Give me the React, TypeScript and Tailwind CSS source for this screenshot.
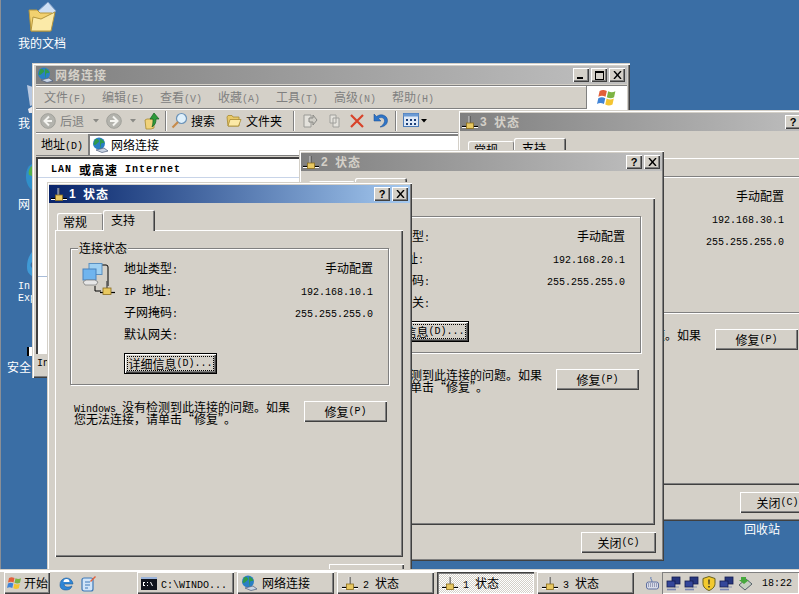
import React from "react";

// win2003 desktop: three status dialogs over the network connections window
const raised = "shadow-[inset_1px_1px_0_#fff,inset_-1px_-1px_0_#404040,inset_-2px_-2px_0_#808080]";
const frame = "shadow-[inset_1px_1px_0_#d4d0c8,inset_2px_2px_0_#fff,inset_-1px_-1px_0_#404040,inset_-2px_-2px_0_#808080]";

// simsun has half width latin, so ascii runs get a 6px wide mono face
const Txt: React.FC<{ text: string }> = ({ text }) => (
    <>
        {text.split(/([\x00-\x7f]+)/).map((part, i) =>
            i % 2 === 1 ? (
                <span key={i} className="font-['Liberation_Mono',monospace] text-[10px] leading-[6px] whitespace-pre">{part}</span>
            ) : (
                <span key={i}>{part}</span>
            )
        )}
    </>
);

const LanIcon = () => (
    <svg width="18" height="16" viewBox="0 0 18 16" className="shrink-0">
        <path d="M1 12.500h16" stroke="#000" strokeWidth="1.200" />
        <path d="M1 13.500h16" stroke="#fff" strokeWidth="1" />
        <path d="M9 2v7" stroke="#555" strokeWidth="1.400" />
        <path d="M8 2v7" stroke="#eee" strokeWidth="0.800" />
        <rect x="5.500" y="9" width="7" height="5.500" fill="#e8c860" stroke="#8a6d1e" strokeWidth="0.800" />
    </svg>
);

const GlobeIcon = () => (
    <svg width="17" height="16" viewBox="0 0 17 16" className="shrink-0">
        <circle cx="7" cy="6.500" r="6" fill="#2a7fc4" />
        <path d="M3 2.500c2-1 3 0 4 1s-1 2-2 3-2 2-3.500 1M8 1.500c2 1 4 2 4.500 4-1.500 1-3 0-3.500 1.500S9 10 8 11" fill="#2f9a4c" />
        <path d="M4 13l6 2.500 6-1.500-4-3z" fill="#c9d4e4" stroke="#4a5a7a" strokeWidth="0.700" />
    </svg>
);

const FolderIcon: React.FC<{ size?: number }> = ({ size = 16 }) => (
    <svg width={size} height={size} viewBox="0 0 16 16" className="shrink-0">
        <path d="M1 4l1-1.500h4l1 1.500h6v9H2z" fill="#e8c868" stroke="#a88a30" strokeWidth="0.800" />
        <path d="M2 13l2-6.500h11l-2.500 6.500z" fill="#fbe9a6" stroke="#a88a30" strokeWidth="0.800" />
    </svg>
);

const NavIcon: React.FC<{ dir: "l" | "r" }> = ({ dir }) => (
    <svg width="16" height="16" viewBox="0 0 16 16" className="shrink-0">
        <circle cx="8" cy="8" r="7.300" fill="#b3b3ad" stroke="#a0a09a" />
        <path d={dir === "l" ? "M9 3.500L4.500 8 9 12.500M5 8h7" : "M7 3.500L11.500 8 7 12.500M11 8H4"} fill="none" stroke="#f4f4f0" strokeWidth="2" />
    </svg>
);

const Caret = ({ color = "#8a8a86" }: { color?: string }) => (
    <svg width="6" height="4" viewBox="0 0 6 4" className="shrink-0">
        <path d="M0 0h6L3 3.500z" fill={color} />
    </svg>
);

const Sep = () => <div className="h-[20px] w-[2px] shrink-0 border-l border-[#808080] bg-white" />;

const WinFlag: React.FC<{ size?: number }> = ({ size = 16 }) => (
    <svg width={size} height={size} viewBox="0 0 16 16" className="shrink-0">
        <path d="M2 3c2-1 3-1 5.500 0l-1 4.500C4.500 6.500 3 6.500 1 7.500z" fill="#e2603a" />
        <path d="M8.500 3.200c2 1 3.500 1 5.500 0l-1 4.600c-2 1-3.500 .8-5.500 0z" fill="#7cb342" />
        <path d="M1 8.500c2-1 3.500-1 5.300 0l-1 4.500c-2-1-3.500-1-5.300 0z" fill="#3f83d6" />
        <path d="M7.300 8.800c2 1 3.500 1 5.500 0l-1 4.500c-2 1-3.500 1-5.500 0z" fill="#f4c430" />
    </svg>
);

const TrayPc = () => (
    <svg width="15" height="15" viewBox="0 0 15 15" className="shrink-0">
        <rect x="6" y="1" width="8" height="7" fill="#27367e" stroke="#141c50" strokeWidth="0.800" />
        <path d="M8 9v2h5" fill="none" stroke="#8a94b0" />
        <rect x="1" y="5" width="8" height="6" fill="#34469a" stroke="#141c50" strokeWidth="0.800" />
        <path d="M1 13.500h9" stroke="#7c88b4" strokeWidth="1.600" />
    </svg>
);

const NetworkBig = () => (
    <svg width="34" height="34" viewBox="0 0 34 34">
        <path d="M20 3h4q2 0 2 2v19M13 24v5h6" fill="none" stroke="#000" />
        <rect x="7" y="1.500" width="13" height="11" fill="#9fd0f2" stroke="#5a8fc0" />
        <rect x="1" y="7" width="13" height="11" fill="#6fb4ee" stroke="#4a82bc" />
        <path d="M1 20l3-2h9l3 2-2 3H3z" fill="#e6e6e6" stroke="#808080" strokeWidth="0.800" />
        <path d="M18 30.500h15" stroke="#000" strokeWidth="1.200" />
        <path d="M25 19v7" stroke="#555" strokeWidth="1.400" />
        <rect x="21" y="26" width="8" height="6.500" fill="#e8c860" stroke="#8a6d1e" strokeWidth="0.800" />
    </svg>
);

const Btn: React.FC<{ text: string; className: string }> = ({ text, className }) => (
    <div className={`flex items-center justify-center bg-[#d4d0c8] ${raised} ${className}`}>
        <Txt text={text} />
    </div>
);

const TitleBar: React.FC<{ active?: boolean; icon: React.ReactNode; title: React.ReactNode; children: React.ReactNode }> = ({ active, icon, title, children }) => (
    <div
        className={`flex h-[18px] shrink-0 items-center pl-[1px] pr-[2px] font-bold tracking-[1px] ${
            active ? "bg-gradient-to-r from-[#0a246a] to-[#a6caf0] text-white" : "bg-gradient-to-r from-[#808080] to-[#c0c0c0] text-[#d4d0c8]"
        }`}
    >
        {icon}
        <span className="ml-[1px] flex flex-1 items-center whitespace-pre">{title}</span>
        {children}
    </div>
);

const CapBtn: React.FC<{ children: React.ReactNode }> = ({ children }) => (
    <div className={`ml-[2px] flex h-[14px] w-[16px] items-center justify-center bg-[#d4d0c8] tracking-normal text-black ${raised}`}>
        {children}
    </div>
);

const CloseGlyph = () => (
    <svg width="9" height="8" viewBox="0 0 9 8"><path d="M1 0l7 8M8 0L1 8" stroke="#000" strokeWidth="1.400" /></svg>
);

const StatusDialog: React.FC<{ n: number; ip: string; active?: boolean; className: string }> = ({ n, ip, active, className }) => {
    const rows = [
        ["地址类型:", "手动配置"],
        ["IP 地址:", ip],
        ["子网掩码:", "255.255.255.0"],
        ["默认网关:", ""],
    ];
    return (
        <div className={`absolute flex h-[411px] w-[365px] flex-col bg-[#d4d0c8] px-[2px] pt-[3px] ${frame} ${className}`}>
            <TitleBar
                active={active}
                icon={<LanIcon />}
                title={
                    <>
                        <span className="w-[14px] font-['Liberation_Sans',sans-serif] text-[12px]">{n}</span>
                        <span>状态</span>
                    </>
                }
            >
                <CapBtn><span className="font-['Liberation_Sans',sans-serif] text-[11px] font-bold leading-none">?</span></CapBtn>
                <CapBtn><CloseGlyph /></CapBtn>
            </TitleBar>

            {/* tabs */}
            <div className="flex h-[27px] shrink-0 items-end pl-[8px]">
                <div className="flex h-[17px] w-[46px] items-center rounded-t-[2px] pl-[6px] shadow-[inset_1px_1px_0_#fff,inset_-1px_0_0_#808080]">常规</div>
                <div className="relative -mb-[1px] flex h-[21px] w-[52px] items-start rounded-t-[2px] bg-[#d4d0c8] pl-[8px] pt-[1px] shadow-[inset_1px_1px_0_#fff,inset_-1px_0_0_#404040,inset_-2px_0_0_#808080]">支持</div>
            </div>

            {/* tab panel */}
            <div className="ml-[6px] flex h-[327px] w-[348px] shrink-0 flex-col px-[15px] pt-[18px] shadow-[inset_1px_1px_0_#fff,inset_-1px_-1px_0_#404040,inset_-2px_-2px_0_#808080]">
                <div className="relative flex h-[137px] w-[319px] shrink-0 border border-[#808080] shadow-[1px_1px_0_#fff,inset_1px_1px_0_#fff]">
                    <span className="absolute -top-[8px] left-[7px] bg-[#d4d0c8] px-[1px] leading-[14px]">连接状态</span>
                    <div className="w-[53px] shrink-0 pl-[11px] pt-[13px]"><NetworkBig /></div>
                    <div className="flex flex-1 flex-col pr-[15px] pt-[8px]">
                        {rows.map(([label, value]) => (
                            <div key={label} className="flex h-[22px] shrink-0 items-center justify-between">
                                <span><Txt text={label} /></span>
                                <span><Txt text={value} /></span>
                            </div>
                        ))}
                        <div className="mt-[8px] h-[21px] w-[93px] border border-black">
                            <div className={`flex h-full items-center justify-center bg-[#d4d0c8] ${raised}`}>
                                <div className="flex h-[15px] w-[87px] items-center justify-center whitespace-nowrap border border-dotted border-black">
                                    <Txt text="详细信息(D)..." />
                                </div>
                            </div>
                        </div>
                    </div>
                </div>
                <div className="mt-[16px] flex items-start justify-between pl-[4px] pr-[1px]">
                    <p className="w-[225px] leading-[12px]">
                        <Txt text="Windows 没有检测到此连接的问题。如果" />
                        <br />
                        <Txt text="您无法连接，请单击“修复”。" />
                    </p>
                    <Btn text="修复(P)" className="h-[21px] w-[83px]" />
                </div>
            </div>

            <div className="mt-[7px] flex justify-end pr-[6px]">
                <Btn text="关闭(C)" className="h-[21px] w-[75px]" />
            </div>
        </div>
    );
};

const Explorer = () => (
    <div className={`absolute left-[32px] top-[63px] flex h-[315px] w-[598px] flex-col bg-[#d4d0c8] pl-[4px] pr-[3px] pt-[3px] ${frame}`}>
        <TitleBar icon={<GlobeIcon />} title="网络连接">
            <CapBtn><div className="mt-[6px] h-[2px] w-[6px] -translate-x-[1px] bg-black" /></CapBtn>
            <CapBtn><div className="h-[9px] w-[9px] border border-t-2 border-black" /></CapBtn>
            <CapBtn><CloseGlyph /></CapBtn>
        </TitleBar>

        {/* menu bar */}
        <div className="mt-[1px] flex h-[24px] shrink-0 items-center border-y border-[#808080] pl-[8px] text-[#808080] shadow-[inset_0_1px_0_#fff]">
            {["文件(F)", "编辑(E)", "查看(V)", "收藏(A)", "工具(T)", "高级(N)", "帮助(H)"].map((m) => (
                <span key={m} className="w-[58px] shrink-0"><Txt text={m} /></span>
            ))}
            <div className="ml-auto flex h-[23px] w-[41px] items-center justify-center self-start border-l border-[#808080] bg-white">
                <WinFlag size={21} />
            </div>
        </div>

        {/* toolbar */}
        <div className="flex h-[24px] shrink-0 items-center border-b border-[#808080] pl-[4px] shadow-[inset_0_1px_0_#fff]">
            <NavIcon dir="l" />
            <span className="ml-[4px] w-[33px] text-[#808080]">后退</span>
            <Caret />
            <div className="ml-[7px]"><NavIcon dir="r" /></div>
            <div className="ml-[8px]"><Caret /></div>
            <div className="ml-[8px] mr-[5px] flex">
                <svg width="16" height="18" viewBox="0 0 16 18" className="shrink-0">
                    <path d="M1 8l2-1h7v9l-3 1-5 0z" fill="#f0d27a" stroke="#a88a30" strokeWidth="0.800" />
                    <path d="M10 1l5 6h-3c0 4-1 6-4 8 1-3 1-5 1-8H6z" fill="#2e9a3c" stroke="#14601e" strokeWidth="0.700" />
                </svg>
            </div>
            <Sep />
            <svg width="17" height="17" viewBox="0 0 17 17" className="ml-[4px] shrink-0">
                <circle cx="10.500" cy="6.500" r="5" fill="#dff0fb" stroke="#6b93b8" strokeWidth="1.200" />
                <path d="M7 10l-5.500 5.500" stroke="#c68a4a" strokeWidth="2.200" />
            </svg>
            <span className="ml-[3px] w-[35px] shrink-0">搜索</span>
            <FolderIcon />
            <span className="ml-[4px] w-[47px] shrink-0">文件夹</span>
            <Sep />
            <svg width="16" height="16" viewBox="0 0 16 16" className="ml-[7px] shrink-0">
                <path d="M2 2h7v12H2z" fill="#e4e2dc" stroke="#9a9a96" />
                <path d="M7 5h4V2l4 5-4 5V9H7z" fill="#cfcdc6" stroke="#8a8a86" />
            </svg>
            <svg width="16" height="16" viewBox="0 0 16 16" className="ml-[9px] shrink-0">
                <path d="M3 2h6v8H3zM6 5h6v9H6z" fill="#e4e2dc" stroke="#a0a09c" />
            </svg>
            <svg width="16" height="16" viewBox="0 0 16 16" className="ml-[6px] shrink-0">
                <path d="M2 2l12 12M14 2L2 14" stroke="#d8432a" strokeWidth="2.200" />
            </svg>
            <svg width="17" height="17" viewBox="0 0 17 17" className="ml-[7px] shrink-0">
                <path d="M2 2v7h7L6.500 6.500C9 4.500 13 6 12.500 9.500 12 12 10 14 8 15c4 0 7.500-2.500 7.500-6.500 0-5-6.500-7.500-11-4z" fill="#2d74c8" stroke="#184a8c" strokeWidth="0.500" />
            </svg>
            <div className="ml-[6px]"><Sep /></div>
            <svg width="17" height="15" viewBox="0 0 17 15" className="ml-[6px] shrink-0">
                <rect x="0.500" y="0.500" width="15" height="13" fill="#dfe9f6" stroke="#4a7ab8" />
                <path d="M0.500 0.500h15v3h-15z" fill="#6a9ad4" />
                <path d="M3 6h2v2H3zM7 6h2v2H7zM11 6h2v2h-2zM3 10h2v2H3zM7 10h2v2H7zM11 10h2v2h-2z" fill="#1c3f78" />
            </svg>
            <div className="ml-[1px]"><Caret color="#000" /></div>
        </div>

        {/* address bar */}
        <div className="flex h-[23px] shrink-0 items-center border-b border-[#808080] pl-[5px] shadow-[inset_0_1px_0_#fff]">
            <span className="w-[47px] shrink-0"><Txt text="地址(D)" /></span>
            <div className="flex h-[21px] flex-1 items-center border-l-2 border-t-2 border-[#808080] bg-white pl-[2px]">
                <GlobeIcon />
                <span className="ml-[2px]">网络连接</span>
            </div>
        </div>

        {/* content */}
        <div className="mt-[1px] flex h-[197px] shrink-0 flex-col border-l-2 border-t-2 border-[#404040] bg-white">
            <div className="flex h-[19px] shrink-0 items-center border-b border-[#c8d4e8] pl-[13px] pt-[3px] font-bold tracking-[1px]">
                <Txt text="LAN 或高速 Internet" />
            </div>
            <div className="mt-[98px] h-[1px] bg-[#a8bcd8]" />
        </div>

        {/* status bar */}
        <div className="flex h-[20px] shrink-0 items-center pl-[1px]"><Txt text="Internet" /></div>
    </div>
);

const TaskBtn: React.FC<{ icon: React.ReactNode; text: string; active?: boolean }> = ({ icon, text, active }) => (
    <div
        className={`flex h-[22px] w-[97px] shrink-0 items-center gap-[4px] overflow-hidden pl-[4px] whitespace-pre ${
            active
                ? "bg-[repeating-conic-gradient(#fff_0_25%,#d4d0c8_0_50%)] bg-[length:2px_2px] shadow-[inset_1px_1px_0_#404040,inset_2px_2px_0_#808080,inset_-1px_-1px_0_#fff]"
                : `bg-[#d4d0c8] ${raised}`
        }`}
    >
        {icon}
        <span><Txt text={text} /></span>
    </div>
);

const DeskIcon: React.FC<{ label: React.ReactNode; className: string }> = ({ label, className }) => (
    <div className={`absolute text-center leading-[12px] text-white ${className}`}>{label}</div>
);

export default function App() {
    return (
        <div className="relative h-[594px] w-[799px] overflow-hidden bg-[#3a6ea5] font-['Noto_Sans_CJK_SC',sans-serif] text-[12px] text-black">
            <div className="absolute bottom-0 left-0 top-0 w-[1px] bg-[#8a8f96]" />

            {/* desktop icons, the later windows cover most of them */}
            <svg width="32" height="32" viewBox="0 0 32 32" className="absolute left-[26px] top-[1px]">
                <path d="M11 11L22 1l8 9-10 8z" fill="#cfe0f4" stroke="#7d9cc4" />
                <path d="M3 9h8l3 3h12l-2 18H5z" fill="#f2d16f" stroke="#b5963c" />
                <path d="M5 30l2-14 8 2 14-7-4 19z" fill="#fbeaa8" stroke="#b5963c" />
            </svg>
            <DeskIcon label="我的文档" className="left-[18px] top-[37px] w-[48px]" />
            <svg width="7" height="28" viewBox="0 0 7 28" className="absolute left-[26px] top-[85px]">
                <path d="M1 0l6 2v18l-3 1z" fill="#b8c8e0" />
                <path d="M2 24l5-3v7H3z" fill="#e6e8ee" />
            </svg>
            <DeskIcon label="我" className="left-[18px] top-[117px] w-[12px]" />
            <svg width="6" height="26" viewBox="0 0 6 26" className="absolute left-[26px] top-[164px]">
                <path d="M6 0C1 2 0 8 0 13s2 10 6 13z" fill="#2f8fc9" />
                <path d="M6 2C3 4 2 8 3 11l3 1z" fill="#55b04a" />
            </svg>
            <DeskIcon label="网" className="left-[18px] top-[198px] w-[12px]" />
            <svg width="5" height="24" viewBox="0 0 5 24" className="absolute left-[27px] top-[252px]">
                <path d="M5 0C1 5 0 10 0 15s2 7 5 9V16c-2-2-2-4 0-6z" fill="#3f9ad6" />
            </svg>
            <DeskIcon
                label={<span className="block font-['Liberation_Mono',monospace] text-[10px] leading-[12px]">In<br />Exp</span>}
                className="left-[18px] top-[281px] text-left"
            />
            <div className="absolute left-[27px] top-[347px] h-[9px] w-[5px] border-l-2 border-black bg-white" />
            <DeskIcon label="安全" className="left-[6px] top-[361px] w-[26px]" />
            <DeskIcon label="回收站" className="left-[744px] top-[523px] w-[36px]" />

            <Explorer />
            <StatusDialog n={3} ip="192.168.30.1" className="left-[458px] top-[110px]" />
            <StatusDialog n={2} ip="192.168.20.1" className="left-[299px] top-[150px]" />
            <StatusDialog n={1} ip="192.168.10.1" active className="left-[47px] top-[182px]" />

            {/* taskbar */}
            <div className="absolute bottom-0 left-0 right-0 flex h-[24px] items-center border-t-2 border-t-white bg-[#d4d0c8] pl-[4px] shadow-[0_-1px_0_#d4d0c8]">
                <div className={`flex h-[22px] w-[46px] shrink-0 items-center gap-[1px] pl-[3px] ${raised}`}>
                    <WinFlag />
                    <span>开始</span>
                </div>
                <svg width="17" height="18" viewBox="0 0 17 18" className="ml-[8px] shrink-0">
                    <path d="M2 11a6.500 6.500 0 1 1 13-1H6c0 3 4 4 8 2-1 3-3 4-6 4-4 0-6-2-6-5z" fill="#2f86d6" stroke="#1a5a9c" strokeWidth="0.600" />
                    <path d="M5.500 8h6c0-2-1-3-3-3s-3 1-3 3z" fill="#fff" />
                </svg>
                <svg width="16" height="17" viewBox="0 0 16 17" className="ml-[6px] shrink-0">
                    <rect x="1" y="3" width="11" height="13" rx="2" fill="#d0e4f8" stroke="#3d78b8" strokeWidth="1.200" />
                    <path d="M4 7h5M4 10h5M4 13h3" stroke="#3d78b8" />
                    <path d="M9 6l5-5 1 1-5 5z" fill="#e2603a" />
                </svg>
                <div className="w-[40px] shrink-0" />
                <div className="flex gap-[3px]">
                    <TaskBtn
                        icon={
                            <svg width="16" height="13" viewBox="0 0 16 13" className="shrink-0">
                                <rect width="16" height="13" fill="#10131c" />
                                <rect width="16" height="2" fill="#9ab4dc" />
                                <path d="M2 5h2v1H3v2h1v1H2zM6 5h1v1H6zM6 8h1v1H6zM9 5l2 4h1l-2-4z" fill="#fff" />
                            </svg>
                        }
                        text="C:\WINDO..."
                    />
                    <TaskBtn icon={<GlobeIcon />} text="网络连接" />
                    <TaskBtn icon={<LanIcon />} text="2 状态" />
                    <TaskBtn icon={<LanIcon />} text="1 状态" active />
                    <TaskBtn icon={<LanIcon />} text="3 状态" />
                </div>
                <svg width="13" height="14" viewBox="0 0 13 14" className="ml-[12px] shrink-0">
                    <path d="M5 1c-1 2 1 2 1 5" fill="none" stroke="#5a78b4" />
                    <rect x="0.500" y="6" width="12" height="7" rx="2" fill="#d8dce8" stroke="#6070a0" />
                    <path d="M2 8h9M2 10h9" stroke="#5a6088" strokeDasharray="1 1" />
                </svg>
                <div className="ml-[3px] flex h-[22px] flex-1 items-center gap-[3px] pl-[4px] shadow-[inset_1px_1px_0_#808080,inset_-1px_-1px_0_#fff]">
                    <TrayPc />
                    <TrayPc />
                    <svg width="14" height="15" viewBox="0 0 14 15" className="shrink-0">
                        <path d="M7 .5l6 2v5c0 3.500-3 6-6 7-3-1-6-3.500-6-7v-5z" fill="#f2c92e" stroke="#66601e" />
                        <path d="M6.300 3.500h1.400l-.2 5H6.500zM6.300 10h1.400v1.500H6.300z" fill="#222" />
                    </svg>
                    <TrayPc />
                    <svg width="15" height="15" viewBox="0 0 15 15" className="ml-[1px] shrink-0">
                        <path d="M1 9l7-6 6 5-7 6z" fill="#c4cfc0" stroke="#56606a" />
                        <path d="M3 1h5v3h3L6 8 1 4h2z" fill="#46a83c" />
                    </svg>
                    <span className="ml-[6px] font-['Liberation_Mono',monospace] text-[10px]">18:22</span>
                </div>
            </div>
        </div>
    );
}
